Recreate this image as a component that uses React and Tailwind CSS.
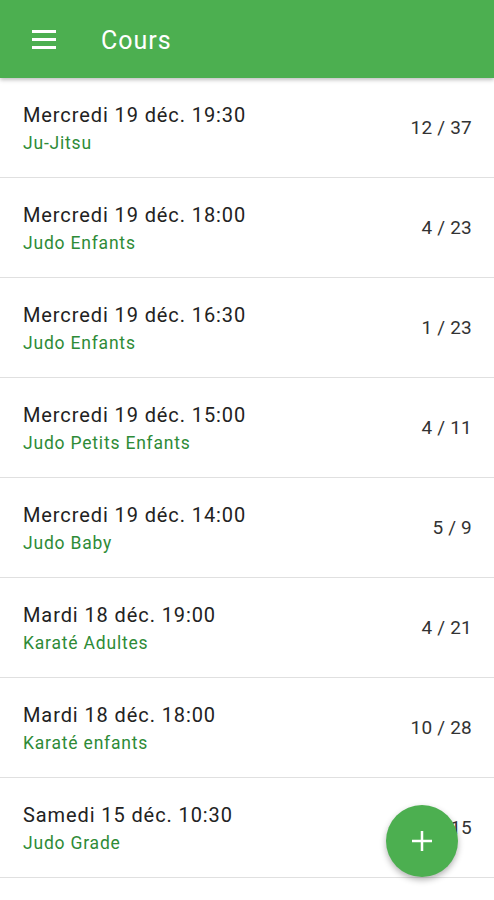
import React from "react";

const courses = [
  { date: "Mercredi 19 déc. 19:30", name: "Ju-Jitsu", count: "12 / 37" },
  { date: "Mercredi 19 déc. 18:00", name: "Judo Enfants", count: "4 / 23" },
  { date: "Mercredi 19 déc. 16:30", name: "Judo Enfants", count: "1 / 23" },
  { date: "Mercredi 19 déc. 15:00", name: "Judo Petits Enfants", count: "4 / 11" },
  { date: "Mercredi 19 déc. 14:00", name: "Judo Baby", count: "5 / 9" },
  { date: "Mardi 18 déc. 19:00", name: "Karaté Adultes", count: "4 / 21" },
  { date: "Mardi 18 déc. 18:00", name: "Karaté enfants", count: "10 / 28" },
  { date: "Samedi 15 déc. 10:30", name: "Judo Grade", count: "8 / 15" },
];

const CourseRow = ({ course }) => (
  <div className="flex items-center justify-between h-[100px] pl-[23px] pr-[22px] border-b border-[#e0e0e0]">
    <div className="flex flex-col self-start pt-[24px]">
      <span className="text-[20px] leading-[26px] tracking-[0.9px] text-[#222222]">{course.date}</span>
      <span className="mt-[3px] text-[17.5px] leading-[24px] tracking-[0.8px] text-[#2e8b37]">{course.name}</span>
    </div>
    <span className="mt-[1px] text-[19px] leading-[24px] tracking-[0.2px] text-[#333333]">{course.count}</span>
  </div>
);

export default function App() {
  return (
    <div
      className="relative w-[494px] h-[900px] bg-white overflow-hidden"
      style={{ fontFamily: "Roboto, 'Liberation Sans', sans-serif" }}
    >
      {/* Toolbar */}
      <div className="flex items-center h-[78px] bg-[#4caf50] shadow-[0_2px_4px_rgba(0,0,0,0.25)] relative z-10">
        <button className="ml-[32px] w-[24px] flex flex-col gap-[5px]">
          <span className="block h-[3px] w-[24px] bg-white" />
          <span className="block h-[3px] w-[24px] bg-white" />
          <span className="block h-[3px] w-[24px] bg-white" />
        </button>
        <h1 className="ml-[45px] mt-[3px] text-[25px] leading-[30px] tracking-[1px] text-white">Cours</h1>
      </div>

      {/* List */}
      <div className="flex flex-col">
        {courses.map((c, i) => (
          <CourseRow key={i} course={c} />
        ))}
      </div>

      {/* FAB */}
      <button className="absolute left-[386px] top-[805px] w-[72px] h-[72px] rounded-full bg-[#4caf50] shadow-[0_3px_6px_rgba(0,0,0,0.3)] flex items-center justify-center">
        <svg width="24" height="24" viewBox="0 0 24 24">
          <path d="M12 2v20M2 12h20" stroke="white" strokeWidth="2.5" />
        </svg>
      </button>
    </div>
  );
}
